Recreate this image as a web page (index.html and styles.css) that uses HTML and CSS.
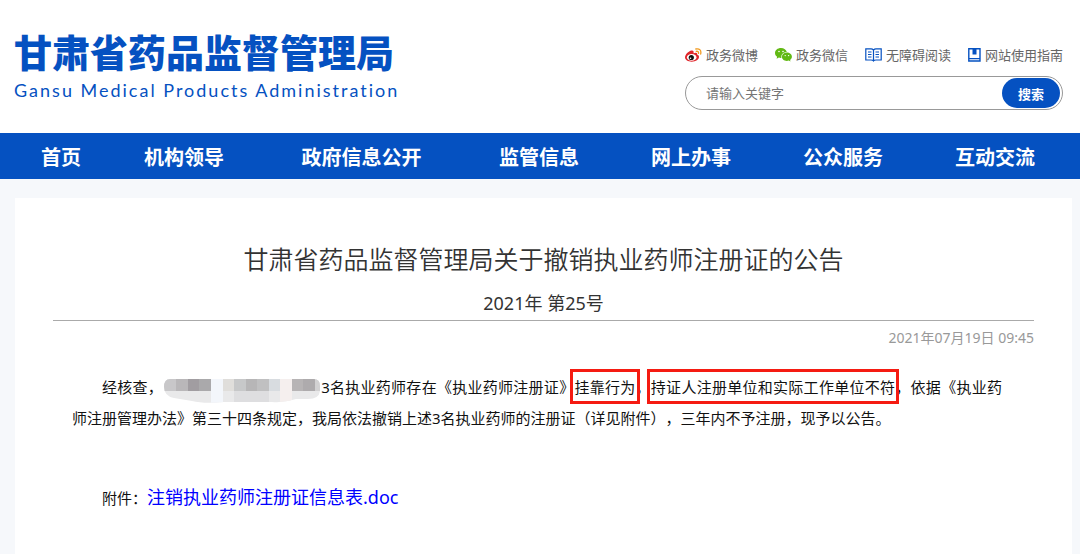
FILE: index.html
```html
<!DOCTYPE html>
<html lang="zh-CN">
<head>
<meta charset="utf-8">
<meta name="viewport" content="width=device-width, initial-scale=1">
<title>甘肃省药品监督管理局</title>
<link rel="stylesheet" href="styles.css">
</head>
<body>
<header class="header">
  <div class="brand">
    <div class="brand-name">甘肃省药品监督管理局</div>
    <div class="brand-sub">Gansu Medical Products Administration</div>
  </div>
  <div class="tools">
    <div class="links">
      <a href="#"><svg width="17" height="14" viewBox="0 0 17 14" aria-hidden="true"><path d="M6.5 2.5C3.5 3 0 6.500 0 9.300C0 12 3 13.700 6.700 13.700C11 13.700 14 11.400 14 9C14 7.500 13 7 12 6.600C12.600 5 11.500 4 8.500 5.200C9 3.400 8.400 2.200 6.500 2.500Z" fill="#e0262b"/><ellipse cx="6.700" cy="9.400" rx="4.800" ry="3.400" fill="#fff"/><circle cx="6.300" cy="9.500" r="2.600" fill="#111"/><circle cx="5.500" cy="10.200" r=".8" fill="#fff"/><path d="M10.800 1Q16.800.2 15.700 6M11.200 3.300Q14 3 13.500 5.400" fill="none" stroke="#f19a20" stroke-width="1.300" stroke-linecap="round"/></svg>政务微博</a>
      <a href="#"><svg width="17" height="14" viewBox="0 0 17 14" aria-hidden="true"><path d="M6 0C2.600 0 0 2.200 0 5C0 6.600.8 7.900 2.100 8.800L1.600 10.800L3.900 9.600Q5 10 6.400 9.900C5.800 6.500 8.500 4 11.800 4C11.300 1.700 9 0 6 0Z" fill="#62b914"/><path d="M11.800 4.600C9 4.600 6.900 6.400 6.900 8.700S9 12.900 11.800 12.900Q12.800 12.900 13.700 12.600L15.500 13.600L15.100 11.900C16.200 11.100 16.900 10 16.900 8.700C16.900 6.400 14.600 4.600 11.800 4.600Z" fill="#62b914"/><g fill="#fff"><circle cx="4" cy="3.500" r=".8"/><circle cx="8" cy="3.500" r=".8"/><circle cx="10.200" cy="7.600" r=".7"/><circle cx="13.600" cy="7.600" r=".7"/></g></svg>政务微信</a>
      <a href="#"><svg width="17" height="14" viewBox="0 0 17 14" aria-hidden="true"><path d="M8.500 2V12.500M8.500 2Q7.500.8 6 .8H.8V12H6Q7.800 12 8.500 13Q9.200 12 11 12H16.200V.8H11Q9.500.8 8.500 2M3 4H6.500M3 6.500H6.500M3 9H6.500M10.500 4H14M10.500 6.500H14M10.500 9H14" fill="none" stroke="#0551c1" stroke-width="1.200"/></svg>无障碍阅读</a>
      <a href="#"><svg width="13" height="14" viewBox="0 0 13 14" aria-hidden="true"><path d="M.8.8H12V13H.8ZM.8 10.600H12" fill="none" stroke="#0551c1" stroke-width="1.400"/><path d="M4.500 1H8.500V6.500H4.500Z" fill="#0551c1"/></svg>网站使用指南</a>
    </div>
    <form class="search">
      <input type="text" placeholder="请输入关键字" aria-label="请输入关键字">
      <button type="button">搜索</button>
    </form>
  </div>
</header>
<nav class="nav">
  <a href="#">首页</a>
  <a href="#">机构领导</a>
  <a href="#">政府信息公开</a>
  <a href="#">监管信息</a>
  <a href="#">网上办事</a>
  <a href="#">公众服务</a>
  <a href="#">互动交流</a>
</nav>
<main class="article">
  <h1>甘肃省药品监督管理局关于撤销执业药师注册证的公告</h1>
  <p class="number">2021年 第25号</p>
  <p class="date">2021年07月19日 09:45</p>
  <div class="content">
    <p>经核查，<svg class="mosaic" width="156" height="24" viewBox="0 0 156 24" aria-hidden="true"><defs><clipPath id="m"><path d="M6 0H150Q156 0 156 7V12Q155 20 144 20H132Q120 24 108 23H60Q40 25 28 22L10 19Q0 17 0 8Q0 0 6 0Z"/></clipPath></defs><g clip-path="url(#m)"><path fill="#e9e9ea" d="M0 0H156V24H0Z"/><path fill="#c8c7c9" d="M0 0H12V12H0Z"/><path fill="#b9b7b9" d="M12 0H24V12H12Z"/><path fill="#a19da1" d="M24 0H35V12H24Z"/><path fill="#aaa9ab" d="M35 0H47V12H35Z"/><path fill="#f3f6fb" d="M47 0H59V24H47Z"/><path fill="#e0dedb" d="M59 0H70V12H59Z"/><path fill="#c7c8c9" d="M70 0H82V12H70Z"/><path fill="#b7b6b7" d="M82 0H93V12H82Z"/><path fill="#c0c0c1" d="M93 0H105V12H93Z"/><path fill="#d8dce0" d="M105 0H116V12H105Z"/><path fill="#f5efee" d="M116 0H128V24H116Z"/><path fill="#b7b4b5" d="M128 0H139V12H128Z"/><path fill="#aeabad" d="M139 0H151V12H139Z"/><path fill="#d2d1d2" d="M151 0H156V12H151Z"/><path fill="#dedee0" d="M70 12H105V24H70Z"/></g></svg>3名执业药师存在《执业药师注册证》<span class="mark">挂靠行为</span>，<span class="mark">持证人注册单位和实际工作单位不符</span>，依据《执业药师注册管理办法》第三十四条规定，我局依法撤销上述3名执业药师的注册证（详见附件），三年内不予注册，现予以公告。</p>
    <p class="attachment">附件：<a href="#">注销执业药师注册证信息表.doc</a></p>
  </div>
</main>
</body>
</html>
```
FILE: styles.css
```css
* {
  box-sizing: border-box;
}

body {
  margin: 0;
  min-height: 100vh;
  display: flex;
  flex-direction: column;
  background: #f6f8fb;
  color: #333;
  font-family: "Noto Sans", "Noto Sans CJK SC", sans-serif;
  text-spacing-trim: space-all;
}

a {
  color: inherit;
  text-decoration: none;
}

.header {
  display: flex;
  justify-content: space-between;
  align-items: flex-start;
  padding: 28px 17px 23px 14px;
  background: #fff;
}

.brand {
  color: #0551c1;
}

.brand-name {
  font-size: 38px;
  line-height: 48px;
  font-weight: 900;
}

.brand-sub {
  font-family: Lato, sans-serif;
  font-size: 18px;
  line-height: 28px;
  letter-spacing: 2px;
}

.tools {
  width: 378px;
  padding-top: 17px;
}

.links {
  display: flex;
  justify-content: space-between;
  font-size: 13px;
  line-height: 20px;
  color: #666;
}

.links a {
  display: flex;
  align-items: center;
  gap: 4px;
}

.search {
  display: flex;
  align-items: center;
  height: 34px;
  margin: 11px 0 0;
  padding: 0 2px 0 20px;
  border: 1px solid #999;
  border-radius: 17px;
}

.search input {
  flex: 1;
  min-width: 0;
  padding: 0;
  border: 0;
  outline: 0;
  background: none;
  font: inherit;
  font-size: 13px;
}

.search input::placeholder {
  color: #757575;
}

.search button {
  width: 58px;
  height: 30px;
  padding: 0;
  border: 0;
  border-radius: 15px;
  background: #0551c1;
  color: #fff;
  font: inherit;
  font-size: 13px;
  font-weight: 700;
}

.nav {
  display: grid;
  grid-template-columns: 94fr 152fr 203fr 152fr 152fr 152fr 152fr;
  padding: 4px 9px 0 14px;
  background: #0551c1;
  color: #fff;
  font-size: 20px;
  font-weight: 700;
  line-height: 42px;
  text-align: center;
}

.article {
  flex: 1;
  margin: 19px 8px 0 15px;
  padding: 40px 38px;
  background: #fff;
}

.article h1 {
  margin: 0;
  font-size: 25px;
  line-height: 42px;
  font-weight: 350;
  text-align: center;
}

.article p {
  margin: 0;
}

.article .number {
  padding: 7px 0 1px;
  border-bottom: 1px solid #aaa;
  font-size: 18px;
  line-height: 32px;
  text-align: center;
}

.article .date {
  margin-top: 7px;
  color: #999;
  font-size: 14px;
  line-height: 20px;
  text-align: right;
}

.content {
  padding: 24px 32px 0 19px;
  color: #111;
  font-size: 15px;
  line-height: 31px;
}

.content p {
  text-indent: 2em;
  text-align: justify;
}

.mosaic {
  margin: 0 1px;
  vertical-align: -10px;
}

.mark {
  padding: 4px 0 3px;
  outline: 3px solid #f51b12;
  outline-offset: 1px;
}

.content .attachment {
  margin-top: 48px;
}

.attachment a {
  color: #00f;
  font-size: 18px;
}
```
